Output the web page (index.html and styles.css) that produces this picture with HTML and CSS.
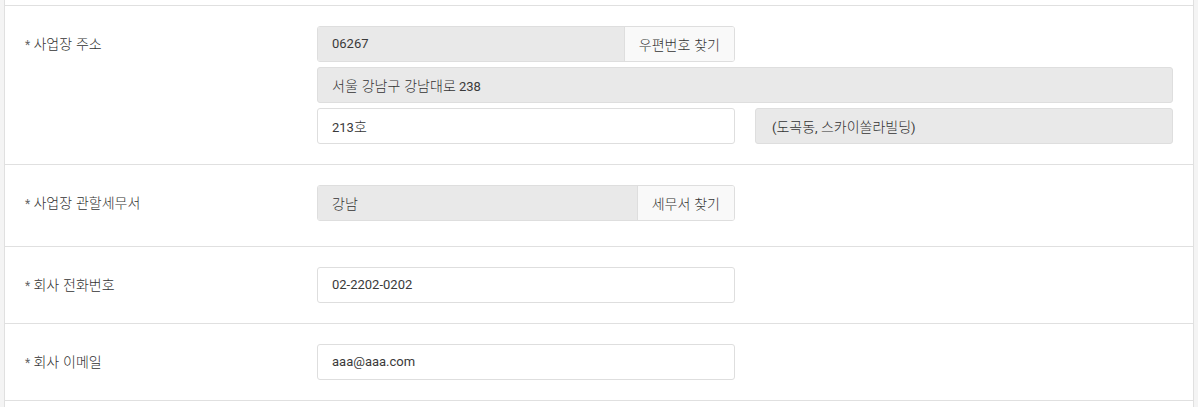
FILE: index.html
```html
<!DOCTYPE html>
<html lang="ko">
<head>
<meta charset="utf-8">
<link rel="stylesheet" href="styles.css">
</head>
<body>
<div class="panel">
  <div class="row">
    <div class="label"><span class="req">*</span> <span class="ko">사업장 주소</span></div>
    <div class="fields">
      <div class="half">
        <div class="group">
          <div class="box disabled grow">06267</div>
          <div class="btn"><span class="ko">우편번호 찾기</span></div>
        </div>
      </div>
      <div class="box disabled full"><span class="ko">서울 강남구 강남대로</span> 238</div>
      <div class="box">213<span class="ko">호</span></div>
      <div class="box disabled extra">(<span class="ko">도곡동</span>, <span class="ko">스카이쏠라빌딩</span>)</div>
    </div>
  </div>
  <div class="row row-tax">
    <div class="label"><span class="req">*</span> <span class="ko">사업장 관할세무서</span></div>
    <div class="fields">
      <div class="half">
        <div class="group">
          <div class="box disabled grow"><span class="ko">강남</span></div>
          <div class="btn"><span class="ko">세무서 찾기</span></div>
        </div>
      </div>
    </div>
  </div>
  <div class="row">
    <div class="label"><span class="req">*</span> <span class="ko">회사 전화번호</span></div>
    <div class="fields">
      <div class="box">02-2202-0202</div>
    </div>
  </div>
  <div class="row last">
    <div class="label"><span class="req">*</span> <span class="ko">회사 이메일</span></div>
    <div class="fields">
      <div class="box">aaa@aaa.com</div>
    </div>
  </div>
</div>
</body>
</html>
```
FILE: styles.css
```css
html, body {
  margin: 0;
  padding: 0;
}
body {
  background: #f4f4f4;
  font-family: Roboto, "Noto Sans CJK KR", sans-serif;
  font-size: 13px;
  color: #3a3a3a;
  height: 407px;
  overflow: hidden;
}
.ko {
  font-family: "Noto Sans CJK KR", sans-serif;
  font-size: 14px;
  font-weight: 300;
  color: #333;
}
.panel {
  margin: 0 4px;
  background: #fff;
  border-left: 1px solid #e0e0e0;
  border-right: 1px solid #e0e0e0;
  padding-top: 5px;
  height: 402px;
}
.row {
  display: grid;
  grid-template-columns: 312px 1fr;
  padding: 20px 20px 20px 0;
  border-top: 1px solid #e0e0e0;
}
.row.row-tax {
  padding-bottom: 25px;
}
.row.last {
  border-bottom: 1px solid #e0e0e0;
}
.label {
  padding-left: 20px;
  height: 36px;
  line-height: 34px;
}
.req {
  color: #666;
  font-size: 12px;
}
.fields {
  display: grid;
  grid-template-columns: 1fr 1fr;
  column-gap: 20px;
  row-gap: 5px;
}
.fields > .box,
.fields > .half {
  grid-column: 1;
}
.fields > .full {
  grid-column: 1 / 3;
}
.fields > .extra {
  grid-column: 2;
  padding-left: 16px;
}
.group {
  display: flex;
  height: 36px;
  border: 1px solid #dedede;
  border-radius: 3px;
  box-sizing: border-box;
  overflow: hidden;
}
.box {
  height: 36px;
  box-sizing: border-box;
  border: 1px solid #dedede;
  border-radius: 3px;
  padding: 0 14px;
  line-height: 34px;
  background: #fff;
  white-space: nowrap;
}
.box.disabled {
  background: #e9e9e9;
}
.group .box {
  border: 0;
  border-radius: 0;
  height: 34px;
}
.grow {
  flex: 1;
}
.btn {
  background: #f9f9f9;
  border-left: 1px solid #dedede;
  line-height: 34px;
  height: 34px;
  text-align: center;
  padding: 0 14px;
  white-space: nowrap;
}
```
